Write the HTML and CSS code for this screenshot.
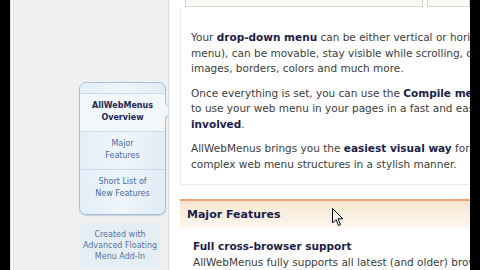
FILE: index.html
```html
<!DOCTYPE html>
<html>
	<head>
		<meta charset="utf-8">
		<title>AllWebMenus Overview</title>
		<link rel="stylesheet" href="styles.css">
	</head>
	<body>
		<div class="page">
			<div class="side">
				<div class="floatmenu">
					<div class="item active">AllWebMenus<br>Overview</div>
					<div class="item">Major<br>Features</div>
					<div class="item">Short List of<br>New Features</div>
					<div class="pointer"></div>
				</div>
				<div class="created">Created with<br>Advanced Floating<br>Menu Add-In</div>
			</div>
			<div class="main">
				<div class="topbar">
					<div class="tb1"></div>
					<div class="tb2"></div>
				</div>
				<div class="intro">
					<p>Your <b>drop-down menu</b> can be either vertical or horizontal (or even a context<br>menu), can be movable, stay visible while scrolling, can use<br>images, borders, colors and much more.</p>
					<p>Once everything is set, you can use the <b>Compile menu</b> command<br>to use your web menu in your pages in a fast and easy way, <b>no coding<br>involved</b>.</p>
					<p>AllWebMenus brings you the <b>easiest visual way</b> for creating<br>complex web menu structures in a stylish manner.</p>
				</div>
				<div class="section">
					<h2>Major Features</h2>
					<h3>Full cross-browser support</h3>
					<p>AllWebMenus fully supports all latest (and older) browsers</p>
				</div>
				<svg class="cursor" width="12" height="19" viewBox="0 0 12 19">
					<path d="M0.5 0.5 L0.5 15 L4 11.5 L6.5 17.5 L8.5 16.6 L6 10.8 L10.8 10.8 Z" fill="#fff" stroke="#000" stroke-width="1"/>
				</svg>
			</div>
		</div>
	</body>
</html>
```
FILE: styles.css
```css
*{
	margin: 0;
	padding: 0;
}
body{
	background-color: #000;
	width: 480px;
	height: 270px;
	overflow: hidden;
}
.page{
	display: flex;
	margin: 0 10px;
	height: 270px;
	background-color: #f0f0f0;
	border-left: 1px solid #d8d8d8;
	box-shadow: inset 2px 0 0 #fbfbfb, inset 3px 0 0 #dcdcdc;
	overflow: hidden;
}
.side{
	width: 157px;
	padding: 82px 0 0 68px;
	box-sizing: border-box;
	font-family: "DejaVu Sans", Verdana, sans-serif;
	font-size: 8px;
	text-align: center;
	flex-shrink: 0;
}
.floatmenu{
	position: relative;
	width: 85px;
	border: 1px solid #a7c0d8;
	border-radius: 7px;
	background: linear-gradient(to right, #e3eef8, #eef5fb 50%, #e1ecf6);
	padding: 10px 0 7px;
	box-shadow: 0 1px 1px #c4cfd9;
}
.floatmenu .item{
	color: #4c6aa2;
	line-height: 12px;
	padding: 6px 0 7px;
	border-top: 1px solid #c9d9e8;
}
.floatmenu .item:last-of-type{
	border-bottom: 1px solid #c9d9e8;
}
.floatmenu .active{
	color: #1e2654;
	font-weight: bold;
	background-color: #f2f7fc;
}
.pointer{
	position: absolute;
	right: -7px;
	top: 22px;
	width: 10px;
	height: 10px;
	background-color: #f4f8fc;
	border-top: 1px solid #a7c0d8;
	border-right: 1px solid #a7c0d8;
	transform: scaleX(0.6) rotate(45deg);
}
.created{
	width: 80px;
	margin: 8px 0 0 1px;
	padding: 6px 0;
	color: #5572a8;
	line-height: 11px;
	background-color: #e6eef5;
}
.main{
	position: relative;
	flex: 1;
	min-width: 0;
	overflow: hidden;
	background-color: #fff;
	border-left: 1px solid #e2e2e2;
	box-shadow: inset 1px 0 0 #f7f7f7;
	padding-left: 11px;
	font-family: "DejaVu Sans", Verdana, sans-serif;
	font-size: 10.5px;
	color: #3c3c3c;
}
.topbar{
	display: flex;
	gap: 4px;
	height: 8px;
	margin-left: 5px;
}
.tb1, .tb2{
	height: 6px;
	border: 1px solid #d6d6d6;
	border-top: none;
	background-color: #fbfbf6;
}
.tb1{
	width: 236px;
}
.tb2{
	flex: 1;
}
.intro{
	border: 1px solid #ececec;
	border-top: none;
	border-right: none;
	padding: 22px 0 12px 10px;
	white-space: nowrap;
	overflow: hidden;
}
.intro p{
	line-height: 15.5px;
	margin-bottom: 9px;
}
.intro p:last-child{
	margin-bottom: 0;
}
b, h2, h3{
	color: #1b1d4a;
}
.section{
	margin-top: 14px;
	white-space: nowrap;
	overflow: hidden;
}
.section h2{
	font-size: 11px;
	line-height: 28px;
	padding-left: 7px;
	border-top: 2px solid #e9a478;
	background: linear-gradient(to bottom, #f6e6d0, #fdf8f1);
}
.section h3{
	font-size: 10.5px;
	margin: 9px 0 0 13px;
	line-height: 16px;
}
.section p{
	margin-left: 13px;
	line-height: 16px;
}
.cursor{
	position: absolute;
	left: 163px;
	top: 208px;
}
```
